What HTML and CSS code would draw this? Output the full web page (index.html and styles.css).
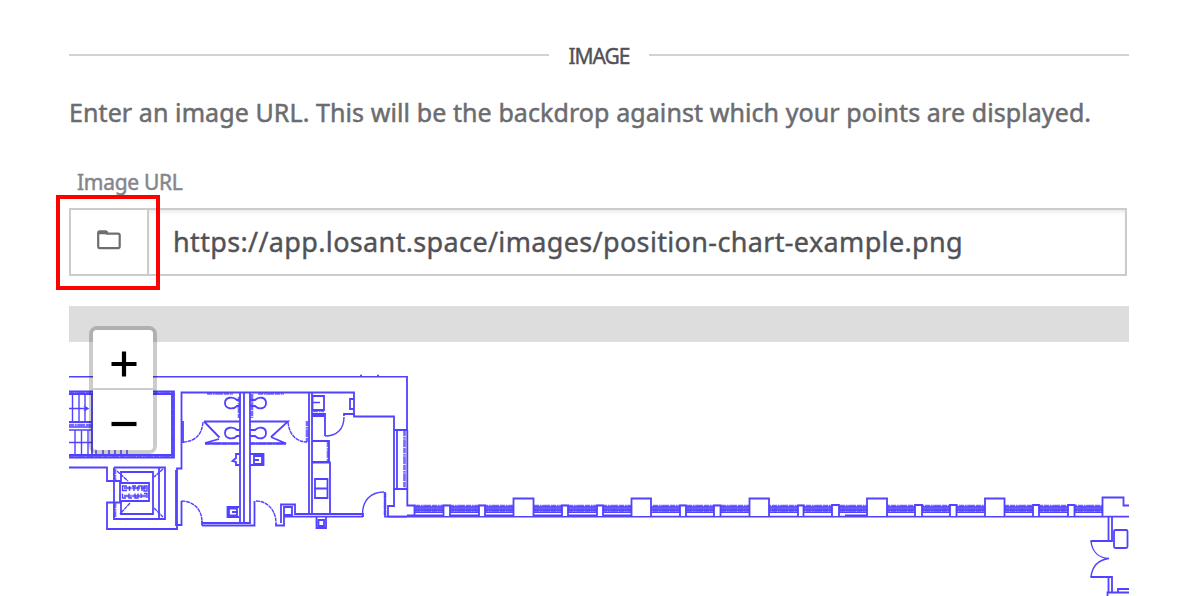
FILE: index.html
```html
<!DOCTYPE html>
<html lang="en">
<head>
<meta charset="utf-8">
<title>Image</title>
<link rel="stylesheet" href="styles.css">
</head>
<body>
<main class="panel">
  <h2 class="section-title"><span class="section-label">IMAGE</span></h2>
  <p class="intro">Enter an image URL. This will be the backdrop against which your points are displayed.</p>
  <label class="field-label" for="url">Image URL</label>
  <div class="field">
    <button class="browse" aria-label="Browse files">
      <svg width="24" height="20" viewBox="0 0 24 20"><path d="M1.2 16V3Q1.2 1.4 2.8 1.4H8.5Q10 1.4 10 3V3.6H21Q22.7 3.6 22.7 5.3V16.5Q22.7 18.1 21 18.1H2.8Q1.2 18.1 1.2 16ZM2 3.200H10"/></svg>
    </button>
    <div class="url" id="url"><span class="url-text">https://app.losant.space/images/position-chart-example.png</span></div>
    <div class="highlight"></div>
  </div>
  <div class="map">
    <svg class="plan" viewBox="69 306 1060 290" width="1060" height="290">
      <rect class="band" x="69" y="306" width="1060" height="36"/>
      <!-- outer walls -->
      <path class="thin" d="M69 376.7H407.5M360 375.5h2M377 375.5h2"/>
      <path d="M407 376V430M394 430H408M394 430V489H407M407.3 430V505.500H414.500V516.500M397 430V489M387.500 516.700H1129"/>
      <!-- stairwell -->
      <path d="M69 391.500H174V457.500H69M69 394H172V455H69M172 392V457M92 393V422M69 422H92V457"/>
      <path class="thin" d="M72.500 393V422M79 393V422M85 393V422M69 408.500H88M84 406l4 2.500-4 2.500M69 427H92M69 430H92M75 430V456M81.500 430V456M88 430V456M69 442.500H100M96 448V456M103 448V456M109 448V456M115 448V456M121 448V456M127 448V456"/>
      <path class="rough" d="M69 392.700H173M172.700 393V456M69 456.500H172M69 425H93"/>
      <!-- elevator -->
      <path d="M69 467.500H107V481H121V472H153V514H121V502.500H107V529H177V468.500H181.500V392.500H248M114 467.500H165V519H114V467.500M159 467.500V519"/>
      <path d="M120 483H149V501H120Z"/>
      <path class="thin" d="M127 486H122.500V490.500H127M129.500 486V491M132 486H136M134 486V491M138 486H142V491M138 486V491M144 486H147V491H144ZM122.500 493.500V498H126M129 493.500V498H132M135 493.500V498H138V493.500M141 493.500V498M144 493.500H147V498"/>
      <path class="thin dash" d="M117 471l11 10M163 469L154 477M130 503l-10 11M154 508l9 9"/>
      <path class="rough" d="M124 488H147M124 496H147M115 469V480M115 503V517"/>
      <!-- left washroom -->
      <path d="M248 392.500H354V416M240 392V523H250V392M244 392V523M183 421V442H184M176 470V525H181.500V501M204 421.500H240M204 421.500L219.500 437.500M205 443L219 439M205 443.500H240M202 523H240M202 525.500H254.500V501M202 521V525.500"/>
      <path class="thin dash" d="M203 422C202 434 196 441 184 442M181.500 501C193 501 202 509 202 522"/>
      <path d="M240 400H237C233 396 225 397 225 403S233 410 237 406H240M240 430H237C233 426 225 427 225 433S233 440 237 436H240"/>
      <path d="M240 454H236V458L232.500 461L236 462V465H240M239 507H227.500V517H239M229 508.500H237V515.500H229ZM232 512H238"/>
      <path class="rough" d="M207 393.500H233M239 397V418M205 443.500H240"/>
      <!-- right washroom -->
      <path d="M250 421.500H288L271 437M271 437L286 443.500H250M250 454H263.500V465H250M254 456H262V464H254ZM254 460H259"/>
      <path d="M250 400H255C259 396 266 397 266 403S259 410 255 406H250M250 430H255C259 426 266 427 266 433S259 440 255 436H250"/>
      <path class="thin dash" d="M288 422C289 434 296 442 307 442M256 501C268 501 276 511 276 523"/>
      <path class="rough" d="M258 393.500H284M252 394V418M250 443.500H286M307 421V442"/>
      <path d="M276 523V525.500H284V516.700H363M281 523V504.500H295V514H363V517M284 507H292V515H284Z"/>
      <!-- kitchen -->
      <path d="M309 392V514M312 392V514M312.500 396H324V410H312.500ZM354 399H350V409H354M312 414H325V436M312 416H325M344 416V414H354V416.500H394V430M312 441H329V462H312M312 462.500H330V514M315 479H327.500V498H315ZM315 488.500H327.500M316.500 517V528H326V517M318.500 520H324V526H318.500Z"/>
      <path class="thin" d="M313 402.500H320M325 436C337 436 344 429 344 417M362.500 516C362 500 371 492 384 492"/>
      <path class="rough" d="M313 411H324M404.500 431V488M328 442V461M385 493V515"/>
      <path d="M385 492V516.700H407M394 489V506H388V516"/>
      <!-- window wall glazing -->
      <path class="glass" d="M415 508.500H1103"/>
      <path class="rough" d="M415 506H1103M415 510.500H1103"/>
      <path class="thin" d="M415 512.200H1103M407 515.300H640M845 515.300H888"/>
      <!-- columns -->
      <path class="column" d="M443.500 516V505.500h6.500V516M479 516V505.500h6V516M513.500 516V498.500h20V516M562 516V505.500h6V516M597 516V505.500h6V516M631.500 516V498.500h19.500V516M680 516V505.500h6V516M714 516V505.500h6.500V516M749.500 516V498.500h19.500V516M798 516V505.500h5.500V516M832 516V505h7V516M867 516V498.500h20V516M915 516V505h7V516M950 516V505h6.500V516M985 516V498.500h19.500V516M1033 516V505h6V516M1068 516V505h6.500V516M1102.500 516V497.500H1123.500V505.500H1129"/>
      <!-- east doors -->
      <path d="M1108.500 516V541H1112V516M1090.500 541H1109M1090.500 577H1112V592M1108.500 577V592M1129 592.500H1107.500V596M1118 592V589H1129"/>
      <rect x="1114" y="530" width="13.500" height="18" rx="1.500"/>
      <path class="thin" d="M1091 541C1092 551 1098 558 1109 558.500C1098 560 1092 567 1091 577"/>
    </svg>
    <div class="zoom">
      <button class="zoom-button" aria-label="Zoom in"><svg width="26" height="26" viewBox="0 0 26 26"><path d="M.5 13H25.500M13 .5V25.500"/></svg></button>
      <button class="zoom-button" aria-label="Zoom out"><svg width="26" height="26" viewBox="0 0 26 26"><path d="M.5 13H25.500"/></svg></button>
    </div>
  </div>
</main>
</body>
</html>
```
FILE: styles.css
```css
* { box-sizing: border-box; }
body { margin: 0; background: #fff; font-family: "Noto Sans", "Open Sans", sans-serif; overflow: hidden; }
.panel { height: 596px; width: 1200px; padding: 40px 71px 0 69px; }
.section-title { display: flex; align-items: center; gap: 19px; height: 30px; margin: 0; font-size: 21px; font-weight: 400; color: #515257; }
.section-title::before, .section-title::after { content: ""; flex: 1; height: 2px; background: #d2d2d2; }
.section-label { width: 62px; height: 30px; line-height: 32px; text-align: center; letter-spacing: -1px; -webkit-text-stroke: .4px; }
.intro { margin: 22px 0 0; height: 41px; line-height: 40px; white-space: nowrap; font-size: 25px; letter-spacing: .09px; color: #6b6c70; -webkit-text-stroke: .5px; }
.field-label { display: block; margin-top: 34px; height: 30px; line-height: 30px; padding-left: 8px; font-size: 21px; letter-spacing: -.3px; color: #85868c; -webkit-text-stroke: .5px; }
.field { position: relative; display: flex; width: 1058px; height: 68px; margin-top: 11px; border: 2px solid #ccc; }
.browse { display: flex; align-items: center; justify-content: center; width: 78px; padding: 0 0 4px; background: #fff; border: 0; border-right: 2px solid #ccc; }
.browse svg { fill: none; stroke: #6d6e70; stroke-width: 2.2; }
.url { flex: 1; padding-left: 24px; line-height: 64px; font-size: 27px; letter-spacing: .35px; color: #515257; white-space: nowrap; box-shadow: inset 0 3px 4px -1px rgba(0, 0, 0, .09); -webkit-text-stroke: .4px; }
.highlight { position: absolute; left: -15px; top: -15px; width: 104px; height: 95px; border: 4px solid #f00; }
.map { position: relative; height: 290px; margin-top: 30px; overflow: hidden; }
.plan { display: block; fill: none; stroke: #5142ff; stroke-width: 1.8; }
.band { fill: #ddd; stroke: none; }
.thin { stroke-width: 1.4; }
.dash { stroke-dasharray: 4 .6; }
.rough { stroke-width: 2.6; stroke-opacity: .8; stroke-dasharray: 5 .7 2 .5 8 .8; }
.glass { stroke-width: 5; stroke: #6a5eff; }
.column { fill: #fff; }
.zoom { position: absolute; left: 20px; top: 20px; display: flex; flex-direction: column; width: 68px; height: 128px; border: 4px solid rgba(0, 0, 0, .2); border-radius: 8px; }
.zoom-button { display: flex; align-items: center; justify-content: center; flex: none; height: 60px; padding: 8px 0 0 2px; border: 0; background: #fff; border-radius: 0 0 4px 4px; }
.zoom-button:first-child { padding-top: 10px; border-bottom: 2px solid #ccc; border-radius: 4px 4px 0 0; }
.zoom-button path { stroke: #000; stroke-width: 4.2; fill: none; }
```
